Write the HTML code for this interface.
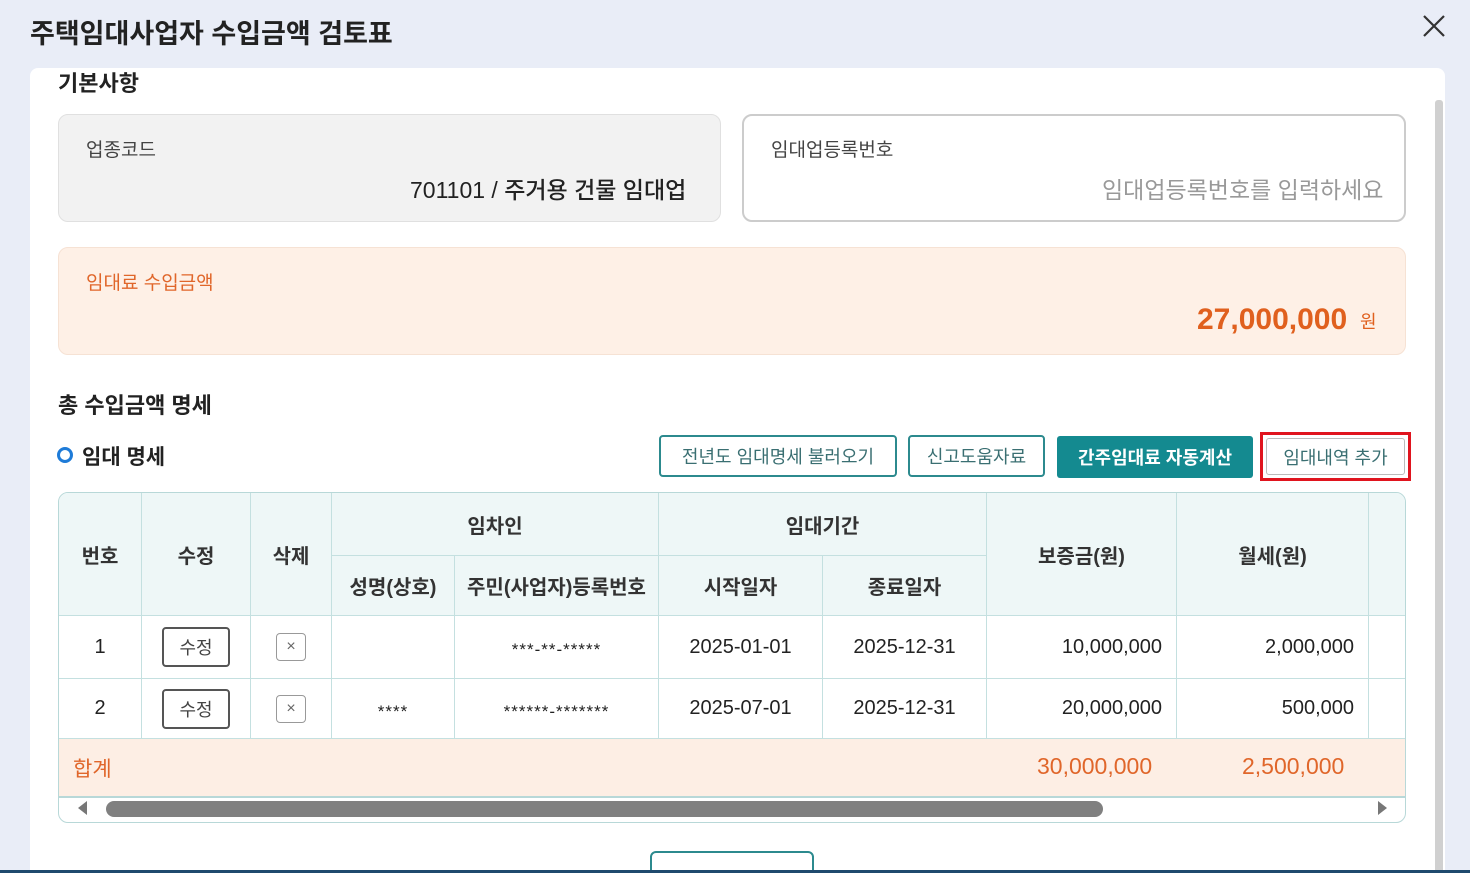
<!DOCTYPE html>
<html><head><meta charset="utf-8">
<style>
*{box-sizing:border-box;margin:0;padding:0}
html,body{width:1470px;height:873px;overflow:hidden}
body{background:#e9edf7;position:relative;font-family:"Liberation Sans","Noto Sans CJK KR",sans-serif;color:#222}
.a{position:absolute}
.panel{left:30px;top:68px;width:1415px;height:805px;background:#fff;border-radius:8px 8px 0 0}
.box{border-radius:10px}
.c{display:flex;align-items:center;justify-content:center}
.btn{border:2px solid #2c8a8e;border-radius:4px;font-size:18px;color:#3a6f72;background:#fff}
.cell{position:absolute;border-right:1.5px solid #c4e0e0;border-bottom:1.5px solid #c4e0e0;display:flex;align-items:center;justify-content:center;font-size:20px}
.h{background:#eef7f7;font-weight:bold;color:#333}
.r{justify-content:flex-end;padding-right:14px}
.ed{width:68px;height:40px;border:2px solid #555;border-radius:4px;font-size:18px;color:#444;background:#fff}
.x{width:30px;height:28px;border:1.5px solid #999;border-radius:4px;font-size:16px;color:#666}
.m{font-size:17px;letter-spacing:1px;padding-top:6px}
</style></head><body>
<div class="a" style="left:30px;top:12px;font-size:27px;font-weight:bold;color:#222">주택임대사업자 수입금액 검토표</div>
<svg class="a" style="left:1422px;top:14px" width="24" height="24" viewBox="0 0 24 24"><path d="M2 2L22 22M22 2L2 22" stroke="#333" stroke-width="2.2"/></svg>
<div class="a panel"></div>
<div class="a" style="left:1435px;top:100px;width:8px;height:773px;background:#d0d0d0;border-radius:3px"></div>
<div class="a" style="left:58px;top:66px;font-size:22px;font-weight:bold">기본사항</div>

<div class="a box" style="left:58px;top:114px;width:663px;height:108px;background:#f2f2f2;border:1.5px solid #e0e0e0"></div>
<div class="a" style="left:86px;top:135px;font-size:19px;color:#444">업종코드</div>
<div class="a" style="left:410px;top:171px;font-size:23px;color:#222;font-weight:500">701101 / 주거용 건물 임대업</div>

<div class="a box" style="left:742px;top:114px;width:664px;height:108px;background:#fff;border:2px solid #ccc"></div>
<div class="a" style="left:771px;top:135px;font-size:19px;color:#444">임대업등록번호</div>
<div class="a" style="left:1102px;top:171px;font-size:23px;color:#999">임대업등록번호를 입력하세요</div>

<div class="a box" style="left:58px;top:247px;width:1348px;height:108px;background:#fef0e6;border:1.5px solid #f6e2d4"></div>
<div class="a" style="left:86px;top:268px;font-size:19px;color:#e0662a">임대료 수입금액</div>
<div class="a" style="left:1197px;top:303px;font-size:30px;font-weight:bold;color:#e0601e">27,000,000</div>
<div class="a" style="left:1360px;top:308px;font-size:18px;color:#e0601e">원</div>

<div class="a" style="left:58px;top:388px;font-size:22px;font-weight:bold">총 수입금액 명세</div>
<div class="a" style="left:57px;top:447px;width:16px;height:16px;border:3.5px solid #1e7bd8;border-radius:50%"></div>
<div class="a" style="left:82px;top:441px;font-size:21px;font-weight:bold">임대 명세</div>

<div class="a btn c" style="left:659px;top:435px;width:238px;height:42px">전년도 임대명세 불러오기</div>
<div class="a btn c" style="left:908px;top:435px;width:137px;height:42px">신고도움자료</div>
<div class="a c" style="left:1057px;top:436px;width:196px;height:42px;background:#148a90;color:#fff;font-weight:bold;font-size:18px;border-radius:3px">간주임대료 자동계산</div>
<div class="a c" style="left:1260px;top:432px;width:151px;height:49px;border:3px solid #e0141e;background:#fff"><div class="c" style="width:139px;height:37px;border:1.5px solid #bbb;border-radius:3px;font-size:18px;color:#3a6f72">임대내역 추가</div></div>

<div class="a" style="left:58px;top:492px;width:1348px;height:331px;border:1.5px solid #b8d8d8;border-radius:10px;overflow:hidden;background:#fff">
<div style="position:relative;left:-58px;top:-492px">
<div class="cell h" style="left:58px;top:492px;width:83px;height:123px">번호</div>
<div class="cell h" style="left:141px;top:492px;width:109px;height:123px">수정</div>
<div class="cell h" style="left:250px;top:492px;width:81px;height:123px">삭제</div>
<div class="cell h" style="left:331px;top:492px;width:327px;height:63px">임차인</div>
<div class="cell h" style="left:331px;top:555px;width:123px;height:60px">성명(상호)</div>
<div class="cell h" style="left:454px;top:555px;width:204px;height:60px">주민(사업자)등록번호</div>
<div class="cell h" style="left:658px;top:492px;width:328px;height:63px">임대기간</div>
<div class="cell h" style="left:658px;top:555px;width:164px;height:60px">시작일자</div>
<div class="cell h" style="left:822px;top:555px;width:164px;height:60px">종료일자</div>
<div class="cell h" style="left:986px;top:492px;width:190px;height:123px">보증금(원)</div>
<div class="cell h" style="left:1176px;top:492px;width:192px;height:123px">월세(원)</div>
<div class="cell h" style="left:1368px;top:492px;width:40px;height:123px"></div>

<div class="cell" style="left:58px;top:615px;width:83px;height:63px">1</div>
<div class="cell" style="left:141px;top:615px;width:109px;height:63px"><div class="ed c">수정</div></div>
<div class="cell" style="left:250px;top:615px;width:81px;height:63px"><div class="x c">×</div></div>
<div class="cell" style="left:331px;top:615px;width:123px;height:63px"></div>
<div class="cell m" style="left:454px;top:615px;width:204px;height:63px">***-**-*****</div>
<div class="cell" style="left:658px;top:615px;width:164px;height:63px">2025-01-01</div>
<div class="cell" style="left:822px;top:615px;width:164px;height:63px">2025-12-31</div>
<div class="cell r" style="left:986px;top:615px;width:190px;height:63px">10,000,000</div>
<div class="cell r" style="left:1176px;top:615px;width:192px;height:63px">2,000,000</div>
<div class="cell" style="left:1368px;top:615px;width:40px;height:63px"></div>

<div class="cell" style="left:58px;top:678px;width:83px;height:60px">2</div>
<div class="cell" style="left:141px;top:678px;width:109px;height:60px"><div class="ed c">수정</div></div>
<div class="cell" style="left:250px;top:678px;width:81px;height:60px"><div class="x c">×</div></div>
<div class="cell m" style="left:331px;top:678px;width:123px;height:60px">****</div>
<div class="cell m" style="left:454px;top:678px;width:204px;height:60px">******-*******</div>
<div class="cell" style="left:658px;top:678px;width:164px;height:60px">2025-07-01</div>
<div class="cell" style="left:822px;top:678px;width:164px;height:60px">2025-12-31</div>
<div class="cell r" style="left:986px;top:678px;width:190px;height:60px">20,000,000</div>
<div class="cell r" style="left:1176px;top:678px;width:192px;height:60px">500,000</div>
<div class="cell" style="left:1368px;top:678px;width:40px;height:60px"></div>

<div class="a" style="left:58px;top:738px;width:1350px;height:59px;background:#fdeee4;border-bottom:2px solid #b8d8d8"></div>
<div class="a" style="left:72px;top:752px;font-size:21px;color:#e0662a">합계</div>
<div class="a" style="left:1036px;top:752px;font-size:23px;color:#e0662a">30,000,000</div>
<div class="a" style="left:1241px;top:752px;font-size:23px;color:#e0662a">2,500,000</div>
<div class="a" style="left:77px;top:800px;width:0;height:0;border-top:7px solid transparent;border-bottom:7px solid transparent;border-right:9px solid #777"></div>
<div class="a" style="left:105px;top:800px;width:997px;height:16px;background:#808080;border-radius:8px"></div>
<div class="a" style="left:1377px;top:800px;width:0;height:0;border-top:7px solid transparent;border-bottom:7px solid transparent;border-left:9px solid #777"></div>
</div></div>

<div class="a" style="left:650px;top:851px;width:164px;height:30px;border:2px solid #2c8a8e;border-radius:6px;background:#fff"></div>
<div class="a" style="left:0;top:870px;width:1470px;height:3px;background:#1f4a6e"></div>
</body></html>
